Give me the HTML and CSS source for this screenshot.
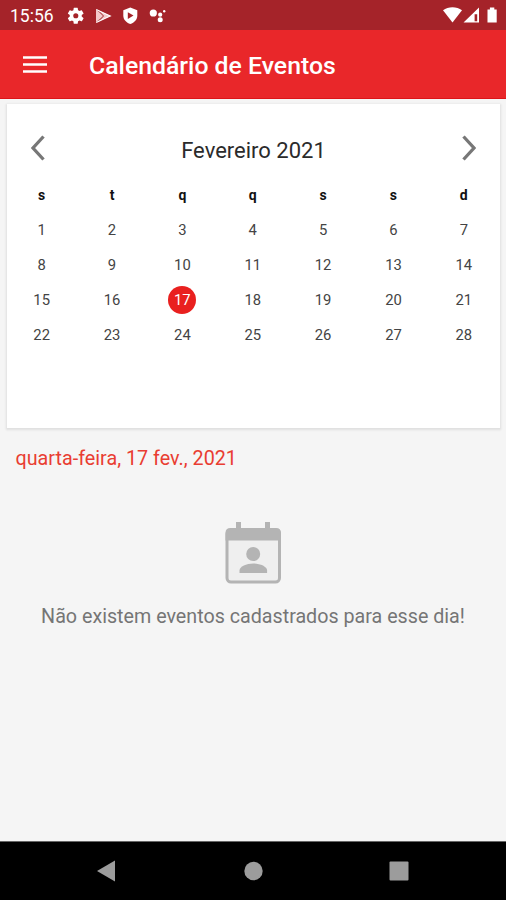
FILE: index.html
```html
<!DOCTYPE html>
<html lang="pt-BR">
<head>
    <title>Calendário de Eventos</title>
    <meta charset="UTF-8">
    <link rel="stylesheet" href="styles.css">
</head>
<body>
    <div class="status-bar">
        <span class="clock">15:56</span>
        <svg class="status-left" width="100" height="20" viewBox="66 6 100 20">
            <!-- settings -->
            <g transform="translate(66.2 6.2) scale(.8)" fill="#fff">
                <path fill-rule="evenodd" d="M19.4 13a7.5 7.5 0 0 0 0-2l2.1-1.6a.5.5 0 0 0 .1-.7l-2-3.4a.5.5 0 0 0-.6-.2l-2.5 1a7.3 7.3 0 0 0-1.7-1l-.4-2.7a.5.5 0 0 0-.5-.4h-4a.5.5 0 0 0-.5.4L9 5.100a7.700 7.700 0 0 0-1.700 1l-2.500-1a.5.5 0 0 0-.6.200l-2 3.400a.5.5 0 0 0 .1.700L4.500 11a8 8 0 0 0 0 2l-2.200 1.600a.5.5 0 0 0-.1.700l2 3.400c.1.200.4.300.6.200l2.500-1c.5.400 1.100.700 1.700 1l.4 2.700c0 .2.200.400.5.400h4c.2 0 .4-.2.500-.4l.4-2.700c.6-.3 1.200-.6 1.700-1l2.500 1c.2.100.5 0 .6-.2l2-3.400a.5.500 0 0 0-.1-.7zM12 15.200a3.200 3.200 0 1 1 0-6.400 3.200 3.200 0 0 1 0 6.400z"/>
            </g>
            <!-- play store -->
            <path d="M96 9.200v13.400L110.500 16z" fill="#f3c9ca"/>
            <path d="M96 9.200l7.600 6.800L96 22.600M103.500 16l-4-4.800M103.500 16l-4 4.800" fill="none" stroke="#bd6062" stroke-width="1"/>
            <path d="M96.300 9.500l9 4.200 5 2.300-5 2.300-9 4.200" fill="none" stroke="#fff" stroke-width="1.100"/>
            <!-- protect shield -->
            <path d="M130.300 7.500l7 2.700v5.300c0 4.200-3 7.100-7 8.600-4-1.500-7-4.400-7-8.600v-5.300z" fill="#fff"/>
            <path d="M127.800 12.200v6.800l5.700-3.400z" fill="#a52329"/>
            <!-- assistant -->
            <g fill="#fff">
                <circle cx="153.300" cy="13" r="3.600"/>
                <circle cx="160.200" cy="14.700" r="2.100"/>
                <circle cx="160.200" cy="19.800" r="2.500"/>
                <circle cx="164.200" cy="11.300" r="1.200"/>
            </g>
        </svg>
        <svg class="status-right" width="60" height="20" viewBox="440 6 60 20" fill="#fff">
            <path d="M443 10.300c5.200-4.200 13.800-4.200 19 0L452.500 22.500z"/>
            <path fill-rule="evenodd" d="M479 7.500v15h-15.500zM474.600 14.300v7h2.600v-7z"/>
            <path d="M487.500 9.600h2.400V7.500h4.400v2.100h2.400v13h-9.200z"/>
        </svg>
    </div>

    <div class="toolbar">
        <svg class="menu" width="24" height="18" viewBox="0 0 24 18">
            <path d="M0 1.500h24M0 8.500h24M0 15.500h24" stroke="#fff" stroke-width="2.300"/>
        </svg>
        <h1>Calendário de Eventos</h1>
    </div>

    <div class="content">
        <div class="card">
            <div class="month">
                <svg width="14" height="26" viewBox="0 0 14 26"><path d="M12.500 1.500L2 13l10.500 11.500"/></svg>
                <h2>Fevereiro 2021</h2>
                <svg width="14" height="26" viewBox="0 0 14 26"><path d="M1.500 1.500L12 13 1.500 24.500"/></svg>
            </div>
            <div class="days">
                <b>s</b><b>t</b><b>q</b><b>q</b><b>s</b><b>s</b><b>d</b>
                <span>1</span><span>2</span><span>3</span><span>4</span><span>5</span><span>6</span><span>7</span>
                <span>8</span><span>9</span><span>10</span><span>11</span><span>12</span><span>13</span><span>14</span>
                <span>15</span><span>16</span><span class="selected">17</span><span>18</span><span>19</span><span>20</span><span>21</span>
                <span>22</span><span>23</span><span>24</span><span>25</span><span>26</span><span>27</span><span>28</span>
            </div>
        </div>

        <p class="date">quarta-feira, 17 fev., 2021</p>

        <div class="empty">
            <svg width="56" height="62" viewBox="0 0 56 62">
                <rect x="2" y="8" width="52.500" height="52" rx="4" fill="#efefef" stroke="#b4b4b4" stroke-width="3"/>
                <path d="M.5 18.500V11q0-5 5-5H11V0h5v6h24V0h5v6h6q5 0 5 5v7.500z" fill="#b4b4b4"/>
                <circle cx="28.200" cy="32" r="7" fill="#b4b4b4"/>
                <path d="M14.500 51v-2.500c0-4 7-7 13.800-7s13.800 3 13.800 7V51z" fill="#b4b4b4"/>
            </svg>
            <p>Não existem eventos cadastrados para esse dia!</p>
        </div>
    </div>

    <div class="nav-bar">
        <svg width="20" height="22" viewBox="0 0 20 22"><path d="M18 .5v21L0 11z"/></svg>
        <svg width="20" height="22" viewBox="0 0 20 22"><circle cx="10.500" cy="11" r="9.200"/></svg>
        <svg width="20" height="22" viewBox="0 0 20 22"><rect x=".5" y="1.500" width="19" height="19" rx="1"/></svg>
    </div>
</body>
</html>
```
FILE: styles.css
```css
* {
  box-sizing: border-box;
}

body {
  margin: 0;
  height: 900px;
  display: flex;
  flex-direction: column;
  overflow: hidden;
  background-color: #f5f5f5;
  font-family: Roboto, sans-serif;
}

h1, h2, p {
  margin: 0;
  font-weight: normal;
  white-space: nowrap;
}

svg {
  display: block;
  flex: none;
}

/* Android status bar */
.status-bar {
  height: 30px;
  display: flex;
  align-items: center;
  padding: 2px 6px 0 10px;
  background-color: #a52329;
  color: #fff;
}

.clock {
  width: 56px;
  font-size: 17.5px;
}

.status-right {
  margin-left: auto;
}

/* App toolbar */
.toolbar {
  height: 69px;
  display: flex;
  align-items: center;
  padding: 2px 0 0 23px;
  background-color: #e9272a;
  border-bottom: 1px solid #dc1519;
  color: #fff;
}

.toolbar h1 {
  margin-left: 42px;
  font-size: 24.8px;
  font-weight: 500;
}

.content {
  flex: 1;
  padding: 5px 6px 0 7px;
}

/* Calendar */
.card {
  height: 324px;
  background-color: #fff;
  box-shadow: 0 1px 2px 1px #dfdfdf;
}

.month {
  display: flex;
  justify-content: space-between;
  padding: 31px 24px 0;
}

.month svg {
  fill: none;
  stroke: #777;
  stroke-width: 3.3;
}

.month h2 {
  font-size: 22px;
  line-height: 31px;
  color: #2b2b2b;
}

.days {
  display: grid;
  grid-template-columns: repeat(7, 1fr);
  grid-auto-rows: 35.2px;
  align-items: center;
  justify-items: center;
  margin: 11px 1px 0 -0.5px;
  font-size: 14.8px;
  color: #444;
}

.days b {
  font-size: 14px;
  color: #111;
}

.days .selected {
  width: 28px;
  height: 28px;
  border-radius: 50%;
  line-height: 28px;
  text-align: center;
  background-color: #e9201f;
  color: #fff;
}

.date {
  margin: 18px 0 0 8.5px;
  font-size: 19.75px;
  line-height: 26px;
  color: #e93d32;
}

/* No events */
.empty {
  display: flex;
  flex-direction: column;
  align-items: center;
  margin: 50px 1px 0 0;
}

.empty p {
  margin-top: 19px;
  font-size: 19.7px;
  line-height: 28px;
  color: #757575;
}

/* Android navigation buttons */
.nav-bar {
  height: 59px;
  display: flex;
  justify-content: space-between;
  align-items: center;
  padding: 0 97px;
  border-top: 1px solid #666;
  background-color: #000;
}

.nav-bar svg {
  fill: #9c9c9c;
}
```
